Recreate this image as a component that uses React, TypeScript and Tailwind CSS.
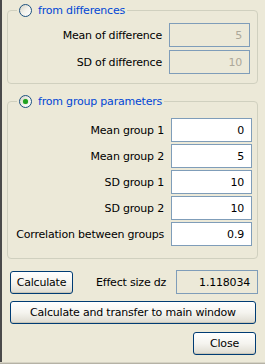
import React from "react";

const BG = "bg-[#ece9d8]";

function Radio({ checked }: { checked?: boolean }) {
  return (
    <span className="inline-flex w-[13px] h-[13px] rounded-full border border-[#1c5180] bg-gradient-to-br from-[#d6d3c4] via-[#f3f2ec] to-white items-center justify-center shrink-0">
      {checked && <span className="w-[5px] h-[5px] rounded-full bg-[#21a121] shadow-[0_0_1px_#5bd15b]" />}
    </span>
  );
}

function Field({ label, value, disabled }: { label: string; value: string; disabled?: boolean }) {
  return (
    <div className="flex items-center h-[24px]">
      <span className="flex-1 text-right pr-[7px] text-black">{label}</span>
      <div
        className={`w-[81px] h-[24px] border border-[#7f9db9] flex items-center justify-end pr-[7px] ${
          disabled ? "bg-[#ece9d8] text-[#aca899]" : "bg-white text-black"
        }`}
      >
        {value}
      </div>
    </div>
  );
}

function XpButton({ children, className = "" }: { children: React.ReactNode; className?: string }) {
  return (
    <button
      className={`h-[23px] rounded-[3px] border border-[#003c74] bg-gradient-to-b from-white via-[#f5f4ef] to-[#dedbd0] text-black flex items-center justify-center shadow-[inset_0_-1px_0_#c9c6b8] ${className}`}
    >
      {children}
    </button>
  );
}

export default function App() {
  return (
    <div className={`w-[265px] h-[364px] ${BG} font-['DejaVu_Sans',sans-serif] text-[11px] tracking-[-0.2px] leading-none`}>
      <div className="h-[362px] border-l-2 border-[#4a4a4a] flex flex-col">
        {/* from differences */}
        <fieldset className="ml-[5px] w-[251px] mt-[3px] border border-[#d0d0bf] rounded-[4px] pl-0 pr-[7px] pt-[6px] pb-[9px]">
          <legend className="ml-[9px] px-[2px] flex items-center gap-[6px] h-[14px]">
            <Radio />
            <span className="text-[#0046d5]">from differences</span>
          </legend>
          <div className="flex flex-col gap-[3px]">
            <Field label="Mean of difference" value="5" disabled />
            <Field label="SD of difference" value="10" disabled />
          </div>
        </fieldset>

        {/* from group parameters */}
        <fieldset className="ml-[5px] w-[251px] mt-[10px] border border-[#d0d0bf] rounded-[4px] pl-0 pr-[5px] pt-[10px] pb-[12px]">
          <legend className="ml-[9px] px-[2px] flex items-center gap-[6px] h-[14px]">
            <Radio checked />
            <span className="text-[#0046d5]">from group parameters</span>
          </legend>
          <div className="flex flex-col gap-[2px]">
            <Field label="Mean group 1" value="0" />
            <Field label="Mean group 2" value="5" />
            <Field label="SD group 1" value="10" />
            <Field label="SD group 2" value="10" />
            <Field label="Correlation between groups" value="0.9" />
          </div>
        </fieldset>

        {/* bottom controls */}
        <div className="flex items-center h-[24px] mt-[11px] pl-[8px]">
          <XpButton className="w-[63px]">Calculate</XpButton>
          <span className="ml-[23px] text-black">Effect size dz</span>
          <div className="ml-auto mr-[7px] w-[82px] h-[24px] border border-[#7f9db9] flex items-center justify-end pr-[7px] text-black">
            1.118034
          </div>
        </div>
        <div className="mt-[7px] pl-[8px] pr-[9px]">
          <XpButton className="w-full h-[22px]">Calculate and transfer to main window</XpButton>
        </div>
        <div className="mt-[8px] flex justify-end pr-[9px]">
          <XpButton className="w-[63px]">Close</XpButton>
        </div>
      </div>
      <div className="h-[2px] bg-[#b5b2a5] border-t border-[#d6d3c4]" />
    </div>
  );
}
